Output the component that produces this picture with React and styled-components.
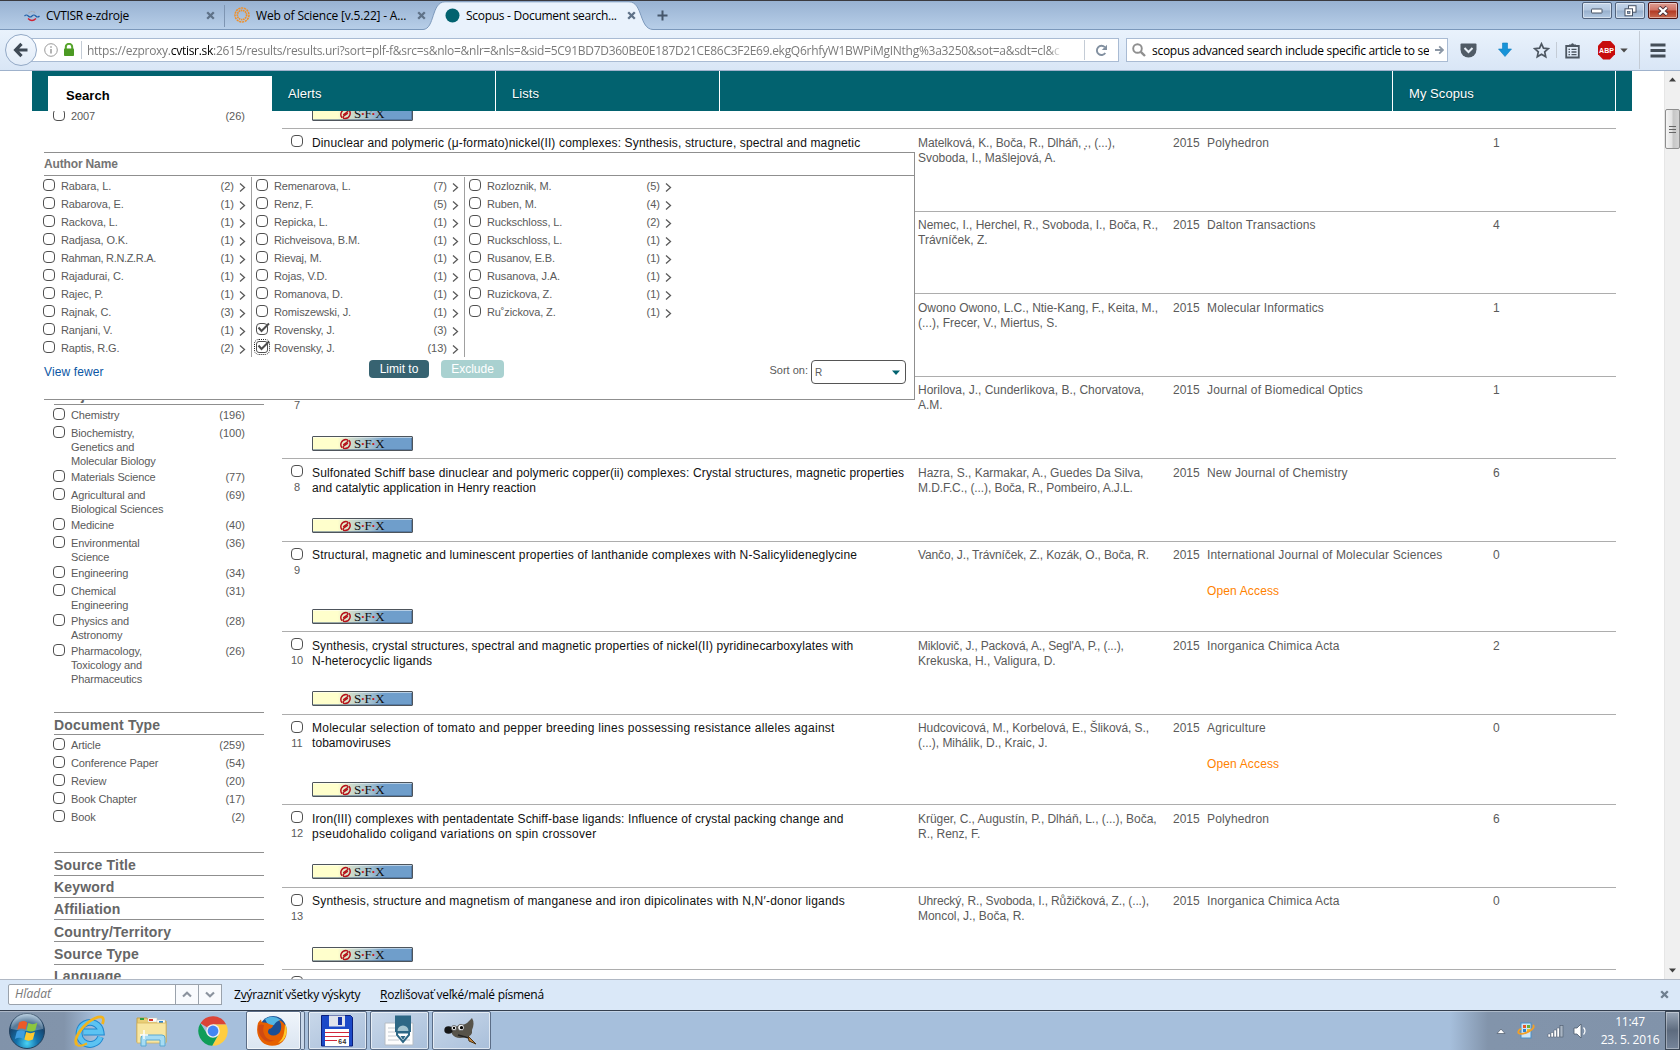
import React from "react";
import styled, { createGlobalStyle, css } from "styled-components";

const arial = `"Liberation Sans", Arial, sans-serif`;
const segoe = `"Open Sans", "Noto Sans", sans-serif`;

const GlobalStyle = createGlobalStyle`
  * { box-sizing: border-box; }
  html, body { margin: 0; padding: 0; background: #fff; overflow: hidden; }
  svg { display: block; flex: none; }
`;

const Screen = styled.div`
  width: 1680px;
  height: 1050px;
  display: flex;
  flex-direction: column;
  overflow: hidden;
  font-family: ${arial};
  color: #5a5a5a;
  background: #fff;
`;

/* ---------- browser: tab strip ---------- */

const TabStrip = styled.div`
  height: 30px;
  flex: none;
  display: flex;
  border-top: 1px solid #3a3a3f;
  border-bottom: 1px solid #7b98bb;
  background: linear-gradient(#98b2d2, #b7cee8);
`;

const Tab = styled.div`
  width: ${(p) => p.$w}px;
  height: 28px;
  display: flex;
  align-items: center;
  padding: 0 9px 0 ${(p) => p.$pad}px;
  gap: 6px;
  font: 12px ${segoe};
  letter-spacing: ${(p) => p.$ls}px;
  color: #000;
  white-space: nowrap;
`;

const TabLabel = styled.span`
  flex: 1;
  line-height: 27px;
`;

const TabDivider = styled.div`
  width: 1px;
  height: 22px;
  margin-top: 4px;
  background: #7e95b2;
`;

const ActiveTab = styled(Tab)`
  position: relative;
  z-index: 1;
  height: 29px;
  margin-bottom: -1px;
`;

const ActiveShape = styled.svg`
  position: absolute;
  left: -12px;
  top: 0;
  z-index: -1;
`;

const NewTab = styled.div`
  width: 34px;
  display: flex;
  align-items: center;
  justify-content: center;
`;

const WindowButtons = styled.div`
  margin-left: auto;
  padding: 1px 2px 0 0;
  display: flex;
  gap: 3px;
`;

const WindowButton = styled.div`
  width: 30px;
  height: 17px;
  display: flex;
  align-items: center;
  justify-content: center;
  border: 1px solid ${(p) => (p.$close ? "#4d1414" : "#50627c")};
  border-radius: 2px;
  box-shadow: inset 0 0 0 1px rgba(255, 255, 255, 0.45);
  background: ${(p) =>
    p.$close
      ? "linear-gradient(#dd9e93 0%, #cf7163 48%, #b23823 52%, #c86a50 100%)"
      : "linear-gradient(#c5d6ea 0%, #b2c6de 48%, #98b0cd 52%, #b4cae3 100%)"};
`;

/* ---------- browser: navigation bar ---------- */

const NavBar = styled.div`
  height: 41px;
  flex: none;
  display: flex;
  align-items: center;
  padding: 0 5px;
  border-bottom: 1px solid #9fb2cc;
  background: linear-gradient(#e9f2fc, #d9e6f6);
`;

const BackButton = styled.div`
  width: 32px;
  height: 32px;
  flex: none;
  margin-right: -15px;
  z-index: 1;
  display: flex;
  align-items: center;
  justify-content: center;
  border: 1px solid #93a9c6;
  border-radius: 50%;
  background: linear-gradient(#f3f8fe, #e2ecf8);
`;

const Field = styled.div`
  height: 24px;
  flex: none;
  display: flex;
  align-items: center;
  border: 1px solid #a9bbd3;
  background: #fff;
  font: 12px ${segoe};
  white-space: nowrap;
`;

const UrlField = styled(Field)`
  width: 1097px;
  padding-left: 21px;
`;

const UrlText = styled.div`
  width: 975px;
  margin-left: 5px;
  overflow: hidden;
  color: #7a7a7a;
  letter-spacing: -0.28px;
  mask-image: linear-gradient(90deg, #000 962px, transparent 975px);
  b { font-weight: 400; color: #000; }
`;

const ThinLine = styled.div`
  width: 1px;
  height: ${(p) => p.$h || 18}px;
  margin-left: ${(p) => (p.$push ? "auto" : `${p.$ml || 0}px`)};
  background: #c4ccd6;
`;

const ReloadBox = styled.div`
  width: 33px;
  display: flex;
  justify-content: center;
`;

const SearchField = styled(Field)`
  width: 322px;
  margin-left: 7px;
  padding: 0 3px 0 5px;
  gap: 6px;
  color: #000;
  letter-spacing: -0.28px;
`;

const SearchText = styled.div`
  flex: 1;
  overflow: hidden;
`;

const ToolIcons = styled.div`
  flex: 1;
  display: flex;
  align-items: center;
  height: 40px;
`;

const ToolIcon = styled.div`
  width: ${(p) => p.$w}px;
  flex: none;
  display: flex;
  align-items: center;
  justify-content: center;
  gap: 5px;
`;

const AbpBadge = styled.div`
  width: 17px;
  height: 19px;
  background: #c70d0d;
  clip-path: polygon(30% 0, 70% 0, 100% 27%, 100% 73%, 70% 100%, 30% 100%, 0 73%, 0 27%);
  color: #fff;
  font: bold 7px/19px ${arial};
  text-align: center;
`;

/* ---------- page ---------- */

const Viewport = styled.div`
  flex: 1;
  min-height: 0;
  display: flex;
`;

const Page = styled.div`
  position: relative;
  width: 1664px;
  display: flex;
  flex-direction: column;
`;

const Header = styled.div`
  height: 40px;
  flex: none;
  margin: 0 32px;
  padding: 0 16px;
  display: flex;
  background: #02626f;
`;

const HeaderItem = styled.div`
  width: ${(p) => p.$w}px;
  padding-left: 16px;
  border-right: 1px solid #fff;
  font-size: 13px;
  line-height: 45px;
  letter-spacing: 0.06px;
  color: #fff;
  text-shadow: 0 1px 1px #013a42;
`;

const SearchItem = styled(HeaderItem)`
  margin-top: 5px;
  padding-left: 18px;
  background: #fff;
  font-weight: bold;
  line-height: 39px;
  color: #000;
  text-shadow: none;
`;

const HeaderFill = styled.div`
  flex: 1;
  border-right: 1px solid #fff;
`;

const Body = styled.div`
  flex: 1;
  min-height: 0;
  overflow: hidden;
  display: flex;
  gap: 18px;
  padding-left: 54px;
`;

const Box = styled.span`
  width: 12px;
  height: 12px;
  flex: none;
  display: block;
  border: 1px solid #505050;
  border-radius: 4px;
  background: #fff;
  ${(p) =>
    p.$focus &&
    css`
      outline: 1px dotted #222;
      outline-offset: 1px;
      border-radius: 3px;
    `}
`;

const CheckMark = styled.svg`
  margin: -2px 0 0 0;
`;

function Checkbox({ checked, focus }) {
  return (
    <Box $focus={focus}>
      {checked && (
        <CheckMark width="13" height="12" viewBox="0 0 13 12">
          <path d="M1.5 5.5 L4.5 9 L12 1.5" fill="none" stroke="#4d4d4d" strokeWidth="2" />
        </CheckMark>
      )}
    </Box>
  );
}

/* ---------- left facets ---------- */

const Sidebar = styled.div`
  width: 210px;
  margin-top: -2px;
  flex: none;
`;

const FacetItem = styled.div`
  min-height: 18px;
  padding: 0 19px 2px 0;
  margin-left: -1px;
  display: flex;
  font-size: 11px;
  line-height: 14px;
  letter-spacing: -0.13px;
`;

const FacetName = styled.span`
  width: 100px;
  margin-left: 6px;
`;

const FacetCount = styled.span`
  margin-left: auto;
  letter-spacing: 0;
`;

const FacetSection = styled.div`
  margin-top: ${(p) => p.$gap}px;
  border-top: 1px solid #8f8f8f;
`;

const FacetHeading = styled.div`
  height: 22px;
  border-bottom: 1px solid #8f8f8f;
  font: bold 14px/25px ${arial};
  letter-spacing: 0.18px;
  color: #666;
`;

const FacetList = styled.div`
  padding-top: 3px;
`;

const ClosedHeading = styled(FacetHeading)`
  height: ${(p) => p.$h}px;
  line-height: ${(p) => p.$lh}px;
`;

/* ---------- results ---------- */

const Results = styled.div`
  width: 1334px;
  margin-top: -66px;
  flex: none;
`;

const Row = styled.div`
  height: ${(p) => p.$h}px;
  display: grid;
  grid-template-columns: 30px 606px 255px 34px 276px 1fr;
  border-top: 1px solid #adadad;
  font-size: 12px;
  line-height: 15px;
`;

const Mark = styled.div`
  width: 30px;
  padding-top: 6px;
  display: flex;
  flex-direction: column;
  align-items: center;
  gap: 3px;
  font-size: 11px;
`;

const Cell = styled.div`
  padding-top: ${(p) => p.$pad}px;
`;

const Title = styled.div`
  height: 30px;
  margin-bottom: ${(p) => p.$gap}px;
  color: #111;
`;

const Line = styled.div`
  letter-spacing: ${(p) => p.$ls || 0}px;
  white-space: pre;
`;

const Journal = styled(Cell)`
  letter-spacing: 0.14px;
`;

const OpenAccess = styled.div`
  margin-top: 21px;
  color: #ff8200;
`;

const Citations = styled(Cell)`
  padding-left: 10px;
`;

const SfxButton = styled.div`
  width: 101px;
  height: 15px;
  display: flex;
  align-items: center;
  gap: 3px;
  padding-left: 27px;
  border: 1px solid #4e555c;
  border-radius: 1px;
  box-shadow: inset 0 1px 0 rgba(255, 255, 255, 0.5), inset -1px -1px 0 rgba(60, 90, 130, 0.5);
  background: linear-gradient(90deg, #ffffcc 0 25%, #cfdccb 38%, #a3c0cf 58%, #6f9ecb 72%);
  font: 13px/13px "Liberation Serif", serif;
  letter-spacing: -0.5px;
  color: #111;
  i { font-style: normal; font-weight: bold; color: #c01515; }
`;

function Sfx() {
  return (
    <SfxButton>
      <svg width="11" height="12" viewBox="0 0 12 12" fill="none" stroke="#b5121b">
        <path d="M9.800 1.800 C12.600 5 10.500 11 5.500 11 C3 11 2.800 9 4.600 7.800 L8.500 5" strokeWidth="1.600" />
        <path d="M2.200 10.200 C-0.600 7 1.500 1 6.500 1 C9 1 9.200 3 7.400 4.200 L3.500 7" strokeWidth="1.600" />
      </svg>
      <span>S<i>·</i>F<i>·</i>X</span>
    </SfxButton>
  );
}

/* ---------- author panel ---------- */

const Panel = styled.div`
  position: absolute;
  left: 44px;
  top: 81px;
  width: 871px;
  height: 248px;
  display: flex;
  flex-direction: column;
  border: 1px solid #8f8f8f;
  border-left: none;
  background: #fff;
`;

const PanelHeading = styled.div`
  height: 23px;
  border-bottom: 1px solid #8f8f8f;
  font: bold 12px/22px ${arial};
  letter-spacing: -0.15px;
  color: #747474;
`;

const AuthorColumns = styled.div`
  height: 180px;
  margin: 1px 0 0 -1px;
  display: flex;
`;

const AuthorColumn = styled.div`
  width: ${(p) => p.$w}px;
  padding-left: ${(p) => p.$pl}px;
  ${(p) => !p.$last && "border-right: 1px solid #a0a0a0;"}
`;

const AuthorRow = styled.div`
  height: 18px;
  padding-right: 5px;
  display: flex;
  font-size: 11px;
  line-height: 19px;
  ${Box} { margin-top: 2px; }
`;

const AuthorName = styled.span`
  flex: 1;
  margin-left: 6px;
  letter-spacing: ${(p) => (p.$tight ? -0.33 : -0.12)}px;
`;

const Chevron = styled.svg`
  margin: 5px 0 0 5px;
`;

const PanelActions = styled.div`
  display: flex;
  align-items: flex-start;
  padding: 3px 8px 0 0;
`;

const ViewFewer = styled.span`
  width: 325px;
  font-size: 12px;
  line-height: 24px;
  letter-spacing: 0.12px;
  color: #0a56a4;
`;

const PillButton = styled.div`
  width: ${(p) => p.$w}px;
  height: 18px;
  margin-right: 12px;
  border-radius: 4px;
  background: ${(p) => (p.$muted ? "#a9d1d0" : "#376371")};
  color: #fff;
  font-size: 12px;
  line-height: 18px;
  text-align: center;
`;

const SortLabel = styled.span`
  margin-left: auto;
  padding-right: 3px;
  font-size: 11px;
  line-height: 20px;
`;

const Select = styled.div`
  width: 95px;
  height: 24px;
  padding: 1px 5px 0 3px;
  display: flex;
  align-items: center;
  justify-content: space-between;
  border: 1px solid #555;
  border-radius: 4px;
  font-size: 10px;
`;

/* ---------- scrollbar ---------- */

const Scrollbar = styled.div`
  width: 16px;
  display: flex;
  flex-direction: column;
  align-items: center;
  background: #f0f0f0;
  border-left: 1px solid #e6e6e6;
`;

const ScrollArrow = styled.div`
  height: 17px;
  display: flex;
  align-items: center;
`;

const Thumb = styled.div`
  width: 15px;
  height: 40px;
  margin: 21px 0 auto;
  display: flex;
  align-items: center;
  justify-content: center;
  border: 1px solid #8e8e8e;
  border-radius: 2px;
  background: linear-gradient(90deg, #f5f5f5, #e3e3e3 45%, #c6c6c6 55%, #d4d4d4);
`;

/* ---------- find bar ---------- */

const FindBar = styled.div`
  height: 31px;
  flex: none;
  display: flex;
  align-items: center;
  padding: 0 11px 1px 8px;
  border-top: 1px solid #b0b8c4;
  background: #dae8f8;
  font: 12px ${segoe};
  color: #000;
  u { text-underline-offset: 2px; }
`;

const FindInput = styled.div`
  width: 168px;
  height: 21px;
  padding-left: 6px;
  border: 1px solid #9aa2ac;
  border-radius: 2px 0 0 2px;
  background: #fff;
  line-height: 18px;
  font-style: italic;
  color: #777;
`;

const FindStep = styled.div`
  width: 24px;
  height: 21px;
  margin-left: -1px;
  display: flex;
  align-items: center;
  justify-content: center;
  border: 1px solid #9aa2ac;
  background: #f8fafd;
`;

const FindOption = styled.span`
  margin-left: ${(p) => p.$ml}px;
  width: ${(p) => p.$w}px;
  letter-spacing: -0.25px;
  white-space: nowrap;
`;

const FindClose = styled.div`
  margin-left: auto;
`;

/* ---------- taskbar ---------- */

const Taskbar = styled.div`
  height: 40px;
  flex: none;
  display: flex;
  align-items: stretch;
  border-top: 1px solid #343f4f;
  box-shadow: inset 0 1px 0 rgba(255, 255, 255, 0.35);
  background: linear-gradient(90deg, #8193aa 0, #8294ab 64px, #a6bfdc 96px, #a6bfdc 1450px, #8294ab 1488px, #8193aa 100%);
`;

const Pinned = styled.div`
  width: ${(p) => p.$w}px;
  padding-left: ${(p) => p.$pl || 0}px;
  display: flex;
  align-items: center;
  justify-content: center;
`;

const TaskButton = styled.div`
  width: ${(p) => p.$w || 59}px;
  margin: 0 3px 0 0;
  padding-right: ${(p) => (p.$active ? 3 : 2)}px;
  display: flex;
  align-items: center;
  justify-content: center;
  border: 1px solid #5b6d87;
  border-radius: 2px;
  box-shadow: inset 0 0 0 1px rgba(255, 255, 255, 0.6);
  background: ${(p) =>
    p.$active ? "linear-gradient(#f0f5fb, #dae5f1)" : "linear-gradient(150deg, #c9d8ea, #a9bfda)"};
`;

const StackEdge = styled.div`
  width: 4px;
  margin: 0 3px 0 -3px;
  border: 1px solid #5b6d87;
  border-left: none;
  border-radius: 0 2px 2px 0;
  background: #c9d8ea;
`;

const Tray = styled.div`
  margin-left: auto;
  display: flex;
  align-items: center;
`;

const Clock = styled.div`
  width: 70px;
  margin-left: 7px;
  font: 12px/18px ${segoe};
  letter-spacing: -0.17px;
  color: #fff;
  text-align: center;
  white-space: nowrap;
`;

const ShowDesktop = styled.div`
  width: 15px;
  height: 39px;
  border: 1px solid #3c4857;
  box-shadow: inset 0 0 0 1px rgba(255, 255, 255, 0.35);
  background: linear-gradient(#9aa7b8, #5d6b7e 50%, #76859a);
`;

/* ---------- data ---------- */

const authorColumns = [
  [["Rabara, L.", 2], ["Rabarova, E.", 1], ["Rackova, L.", 1], ["Radjasa, O.K.", 1], ["Rahman, R.N.Z.R.A.", 1], ["Rajadurai, C.", 1], ["Rajec, P.", 1], ["Rajnak, C.", 3], ["Ranjani, V.", 1], ["Raptis, R.G.", 2]],
  [["Remenarova, L.", 7], ["Renz, F.", 5], ["Repicka, L.", 1], ["Richveisova, B.M.", 1], ["Rievaj, M.", 1], ["Rojas, V.D.", 1], ["Romanova, D.", 1], ["Romiszewski, J.", 1], ["Rovensky, J.", 3, "on"], ["Rovensky, J.", 13, "focus"]],
  [["Rozloznik, M.", 5], ["Ruben, M.", 4], ["Ruckschloss, L.", 2], ["Ruckschloss, L.", 1], ["Rusanov, E.B.", 1], ["Rusanova, J.A.", 1], ["Ruzickova, Z.", 1], ["Ru˚zickova, Z.", 1]],
];

const subjects = [
  ["Chemistry", 196],
  ["Biochemistry, Genetics and Molecular Biology", 100],
  ["Materials Science", 77],
  ["Agricultural and Biological Sciences", 69],
  ["Medicine", 40],
  ["Environmental Science", 36],
  ["Engineering", 34],
  ["Chemical Engineering", 31],
  ["Physics and Astronomy", 28],
  ["Pharmacology, Toxicology and Pharmaceutics", 26],
];

const docTypes = [["Article", 259], ["Conference Paper", 54], ["Review", 20], ["Book Chapter", 17], ["Book", 2]];

const closedFacets = [
  ["Source Title", 23, 24],
  ["Keyword", 22, 22],
  ["Affiliation", 22, 22],
  ["Country/Territory", 22, 24],
  ["Source Type", 23, 24],
  ["Language", 22, 22],
];

/* text lines are [text, letter-spacing] pairs */
const rows = [
  { h: 83, pad: 7, gap: 23 },
  {
    n: 4, h: 83, pad: 7,
    t: [["Dinuclear and polymeric (μ-formato)nickel(II) complexes: Synthesis, structure, spectral and magnetic", 0.145]],
    a: [["Matelková, K., Boča, R., Dlháň, ̦., (...),", -0.11], ["Svoboda, I., Mašlejová, A.", -0.04]],
    j: "Polyhedron", c: 1,
  },
  {
    n: 5, h: 82, pad: 6,
    a: [["Nemec, I., Herchel, R., Svoboda, I., Boča, R.,", -0.03], ["Trávníček, Z.", 0]],
    j: "Dalton Transactions", c: 4,
  },
  {
    n: 6, h: 83, pad: 7,
    a: [["Owono Owono, L.C., Ntie-Kang, F., Keita, M.,", -0.03], ["(...), Frecer, V., Miertus, S.", 0]],
    j: "Molecular Informatics", c: 1,
  },
  {
    n: 7, h: 82, pad: 6,
    a: [["Horilova, J., Cunderlikova, B., Chorvatova,", 0], ["A.M.", 0]],
    j: "Journal of Biomedical Optics", c: 1,
  },
  {
    n: 8, h: 83, pad: 7,
    t: [["Sulfonated Schiff base dinuclear and polymeric copper(ii) complexes: Crystal structures, magnetic properties", 0.15], ["and catalytic application in Henry reaction", 0.06]],
    a: [["Hazra, S., Karmakar, A., Guedes Da Silva,", 0], ["M.D.F.C., (...), Boča, R., Pombeiro, A.J.L.", -0.09]],
    j: "New Journal of Chemistry", c: 6,
  },
  {
    n: 9, h: 90, pad: 6,
    t: [["Structural, magnetic and luminescent properties of lanthanide complexes with N-Salicylideneglycine", 0.165]],
    a: [["Vančo, J., Trávníček, Z., Kozák, O., Boča, R.", -0.14]],
    j: "International Journal of Molecular Sciences", c: 0, open: true,
  },
  {
    n: 10, h: 83, pad: 7,
    t: [["Synthesis, crystal structures, spectral and magnetic properties of nickel(II) pyridinecarboxylates with", 0.115], ["N-heterocyclic ligands", 0.13]],
    a: [["Miklovič, J., Packová, A., Segl'A, P., (...),", -0.19], ["Krekuska, H., Valigura, D.", 0.02]],
    j: "Inorganica Chimica Acta", c: 2,
  },
  {
    n: 11, h: 90, pad: 6,
    t: [["Molecular selection of tomato and pepper breeding lines possessing resistance alleles against", 0.255], ["tobamoviruses", 0.06]],
    a: [["Hudcovicová, M., Korbelová, E., Šliková, S.,", -0.07], ["(...), Mihálik, D., Kraic, J.", -0.04]],
    j: "Agriculture", c: 0, open: true,
  },
  {
    n: 12, h: 83, pad: 7,
    t: [["Iron(III) complexes with pentadentate Schiff-base ligands: Influence of crystal packing change and", 0.125], ["pseudohalido coligand variations on spin crossover", 0.26]],
    a: [["Krüger, C., Augustín, P., Dlháň, L., (...), Boča,", -0.04], ["R., Renz, F.", -0.04]],
    j: "Polyhedron", c: 6,
  },
  {
    n: 13, h: 82, pad: 6,
    t: [["Synthesis, structure and magnetism of manganese and iron dipicolinates with N,N′-donor ligands", 0.21]],
    a: [["Uhrecký, R., Svoboda, I., Růžičková, Z., (...),", -0.14], ["Moncol, J., Boča, R.", -0.04]],
    j: "Inorganica Chimica Acta", c: 0,
  },
  { n: 14, h: 82, pad: 7 },
];

/* ---------- icons ---------- */

const CloseX = ({ color = "#5f7288", size = 9 }) => (
  <svg width={size} height={size} viewBox="0 0 9 9">
    <path d="M1.2 1.2 L7.8 7.8 M7.8 1.2 L1.2 7.8" stroke={color} strokeWidth="2.3" />
  </svg>
);

const WindowsOrb = () => (
  <svg width="38" height="38" viewBox="0 0 38 38">
    <defs>
      <radialGradient id="orb" cx="50%" cy="85%" r="85%">
        <stop offset="0" stopColor="#49d3f5" />
        <stop offset="0.35" stopColor="#1473ad" />
        <stop offset="0.7" stopColor="#174670" />
        <stop offset="1" stopColor="#a7c4dc" />
      </radialGradient>
    </defs>
    <circle cx="19" cy="19" r="17.5" fill="url(#orb)" stroke="#23415e" />
    <path d="M3 17 A16 16 0 0 1 35 17 Q19 21 3 17 Z" fill="#fff" opacity="0.28" />
    <path d="M11 10.500 Q15 7.500 19.200 10.400 L17.500 17.800 Q13.500 15.400 9.200 17.900 Z" fill="#ee5a27" />
    <path d="M20.400 11 Q24.500 13.400 29.300 10.800 L27.300 18.300 Q22.800 20.700 18.600 18.300 Z" fill="#8cc63f" />
    <path d="M8.800 19.400 Q13 17 17.100 19.400 L15.300 26.900 Q11.200 24.500 6.900 27 Z" fill="#3f9de0" />
    <path d="M18.200 20 Q22.500 22.300 26.900 20 L24.900 27.500 Q20.500 29.800 16.400 27.500 Z" fill="#fdc82f" />
  </svg>
);

const IeIcon = () => (
  <svg width="34" height="34" viewBox="0 0 34 34" fill="none">
    <path d="M27.500 23 A11 11 0 1 1 28 18 H10.500" stroke="#1f87cf" strokeWidth="6.800" />
    <path d="M27.500 23 A11 11 0 1 1 28 18 H10.500" stroke="#5cc3f2" strokeWidth="4.800" />
    <path d="M4 31 C-1 25 11 9 22 4.200 C29 1.500 32 3 29.500 10" stroke="#f2b41c" strokeWidth="2.800" />
    <path d="M4 31 C6.500 33 11 31 14 29.500" stroke="#f2b41c" strokeWidth="2" />
  </svg>
);

const ExplorerIcon = () => (
  <svg width="34" height="32" viewBox="0 0 34 32">
    <path d="M2 3 H12 L14 6 H31 V27 H2 Z" fill="#e9cf77" stroke="#c2a04a" />
    <rect x="13" y="3" width="9" height="4" fill="#fff" stroke="#c9c9b0" strokeWidth="0.5" />
    <rect x="22" y="5" width="8" height="4" fill="#fff" stroke="#c9c9b0" strokeWidth="0.5" />
    <rect x="5" y="3" width="4" height="2" fill="#2f9e3e" />
    <rect x="14" y="4" width="4" height="2" fill="#d7372b" />
    <rect x="24" y="6" width="4" height="2" fill="#2a86d1" />
    <path d="M2 8 H31 V28 H2 Z" fill="#f7e6a2" stroke="#d5b45d" strokeWidth="0.8" />
    <path d="M6 31 V23 Q6 20 9 20 H27 Q30 20 30 23 V31 H25 V25 H11 V31 Z" fill="#a6dcf3" stroke="#5aa9d2" />
    <path d="M5 20 H13 M9 15 V24" stroke="#fff" strokeWidth="1.400" />
  </svg>
);

const ChromeIcon = () => (
  <svg width="30" height="30" viewBox="0 0 30 30">
    <path d="M15 15 L2.440 7.250 A14.750 14.750 0 0 1 28.200 8.500 L15 8.500 Z" fill="#db4437" />
    <path d="M28.200 8.500 A14.750 14.750 0 0 1 14.200 29.740 L20.630 18.250 L15 8.500 Z" fill="#ffcd40" />
    <path d="M2.440 7.250 A14.750 14.750 0 0 0 14.200 29.740 L20.630 18.250 L9.370 18.250 Z" fill="#0f9d58" />
    <circle cx="15" cy="15" r="6.800" fill="#f1f1f1" />
    <circle cx="15" cy="15" r="5.400" fill="#4285f4" />
  </svg>
);

const FirefoxIcon = () => (
  <svg width="32" height="32" viewBox="0 0 32 32">
    <circle cx="17" cy="14.500" r="13.500" fill="#1b4f94" />
    <path d="M9 4 Q17 -1 25 5 Q20 6 18 10 Q14 12 11 8 Z" fill="#52b5e2" />
    <path d="M2 8 Q3 6 5 4.500 Q5 7 7 7.500 Q11 7 13 9 Q15 10 17 10 Q17 13 13 14 Q11 17 13 19 Q17 22 22 19 Q26 16 25 9 Q24 6 22.500 5 Q29 7 30.500 14 Q32 24 23 29.500 Q13 33 6 27 Q-1 20 2 8 Z" fill="#e66000" />
    <path d="M29 9 Q31.500 13 30.500 18 Q29 26 22 28 Q27 24 28 18 Q29 13 29 9 Z" fill="#ffcb2d" />
    <path d="M2.500 10 Q5 9 8 10 Q6 16 9 21 Q12 26 19 25 Q12 29 7 24 Q1 18 2.500 10 Z" fill="#d04a12" />
  </svg>
);

const FloppyText = styled.text`
  font: bold 7px "Liberation Mono", monospace;
`;

const FloppyIcon = () => (
  <svg width="32" height="32" viewBox="0 0 32 32">
    <path d="M0.500 0.500 H29.500 L31.500 2.500 V31 H0.500 Z" fill="#1b49c8" stroke="#0b1f7a" />
    <rect x="8" y="0.500" width="16" height="11" fill="#dfe3ec" />
    <rect x="17" y="2" width="4" height="8" fill="#1635a8" />
    <rect x="4" y="14" width="24" height="17" fill="#fff" />
    <path d="M4 17.500 H28 M4 21.500 H28 M4 25.500 H16" stroke="#d1263a" />
    <FloppyText x="17" y="28.500" fill="#333">64</FloppyText>
  </svg>
);

const ReaderIcon = () => (
  <svg width="30" height="32" viewBox="0 0 30 32">
    <path d="M1 8 H29 V30 H1 Z" fill="#fdfdfd" stroke="#b5bcc4" />
    <path d="M4 13 H12 M4 17 H13 M4 21 H12 M4 25 H15 M20 25 H26 M22 17 H26" stroke="#c3c9d0" />
    <path d="M11 0.500 H27 V17 H11 Z" fill="#2d6785" />
    <path d="M13.500 16 A5.500 5.500 0 0 1 24.500 16 Z" fill="#a3c3cf" />
    <path d="M13 17.500 H25 V20 L19 27 L13 20 Z" fill="#fff" stroke="#2d6785" strokeWidth="2" />
    <path d="M16.500 21 H21.500 L19 25 Z" fill="#2d6785" />
  </svg>
);

const GimpIcon = () => (
  <svg width="34" height="28" viewBox="0 0 34 28">
    <path d="M6 10 Q12 11 16 7 Q19 9 23 6 L28 1 Q31 6 28 13 Q29 19 22 20 Q12 23 8 17 Z" fill="#57534a" />
    <ellipse cx="4.500" cy="13" rx="4.200" ry="3.800" fill="#161616" />
    <circle cx="10" cy="11" r="2.600" fill="#f4f4f4" stroke="#333" strokeWidth="0.600" />
    <circle cx="17" cy="10.500" r="3.200" fill="#f4f4f4" stroke="#333" strokeWidth="0.600" />
    <circle cx="10" cy="11" r="1.200" />
    <circle cx="17.500" cy="10.700" r="1.600" />
    <path d="M14 18 L25 21" stroke="#222" strokeWidth="1.500" />
    <path d="M24 19 L32 27 L25 24 Z" fill="#c9873b" stroke="#4a3315" />
  </svg>
);

/* ---------- sections ---------- */

function BrowserTabs() {
  return (
    <TabStrip>
      <Tab $w={224} $pad={24} $ls={-0.29}>
        <svg width="16" height="14" viewBox="0 0 16 14" fill="none">
          <path d="M4.500 5.500 A4 4 0 0 1 11.500 5.500" stroke="#a5adb8" strokeWidth="1.200" strokeDasharray="2 0.600" />
          <path d="M0.500 8 q1.900 -2 3.750 0 t3.750 0 t3.750 0 t3.750 0" stroke="#2161a8" strokeWidth="1.200" />
          <path d="M4 10.500 Q8 14.500 12 10.500" stroke="#cf2233" strokeWidth="1.300" />
        </svg>
        <TabLabel>CVTISR e-zdroje</TabLabel>
        <CloseX />
      </Tab>
      <TabDivider />
      <Tab $w={210} $pad={9} $ls={-0.18}>
        <svg width="16" height="16" viewBox="0 0 16 16" fill="none" stroke="#f08f27">
          <circle cx="8" cy="8" r="7" strokeWidth="1.500" strokeDasharray="2.200 0.700" />
          <circle cx="8" cy="8" r="4.600" strokeWidth="1.700" strokeDasharray="1.600 0.600" />
        </svg>
        <TabLabel>Web of Science [v.5.22] - A...</TabLabel>
        <CloseX />
      </Tab>
      <ActiveTab $w={210} $pad={10} $ls={-0.28}>
        <ActiveShape width="236" height="29" viewBox="0 0 236 29">
          <path d="M0 28.500 C12 28 8 1 22 0.800 H206 C220 1 216 28 230 28.500 V29 H0 Z" fill="#e9f2fc" />
          <path d="M0 28.500 C12 28 8 1 22 0.800 H206 C220 1 216 28 230 28.500" fill="none" stroke="#7b98bb" />
        </ActiveShape>
        <svg width="15" height="15" viewBox="0 0 15 15">
          <circle cx="7.500" cy="7.500" r="7" fill="#02626f" />
        </svg>
        <TabLabel>Scopus - Document search...</TabLabel>
        <CloseX />
      </ActiveTab>
      <NewTab>
        <svg width="11" height="11" viewBox="0 0 11 11">
          <path d="M5.500 0.500 V10.500 M0.500 5.500 H10.500" stroke="#45566b" strokeWidth="2" />
        </svg>
      </NewTab>
      <WindowButtons>
        <WindowButton>
          <svg width="12" height="6" viewBox="0 0 12 6">
            <rect x="0.500" y="1" width="10.500" height="4" rx="0.500" fill="#fff" stroke="#465264" />
          </svg>
        </WindowButton>
        <WindowButton>
          <svg width="13" height="12" viewBox="0 0 13 12">
            <rect x="4.500" y="0.700" width="7.500" height="6.500" fill="#fff" stroke="#465264" />
            <rect x="1" y="3.800" width="7.500" height="7" fill="#fff" stroke="#465264" />
            <rect x="3.500" y="6.500" width="2.500" height="2" fill="#8ba3c0" stroke="#465264" strokeWidth="0.700" />
          </svg>
        </WindowButton>
        <WindowButton $close>
          <svg width="12" height="10" viewBox="0 0 12 10">
            <path d="M2 1.200 L10 8.800 M10 1.200 L2 8.800" stroke="#4a3038" strokeWidth="4" />
            <path d="M2.200 1.500 L9.800 8.500 M9.800 1.500 L2.200 8.500" stroke="#fff" strokeWidth="2.300" />
          </svg>
        </WindowButton>
      </WindowButtons>
    </TabStrip>
  );
}

function Navigation() {
  return (
    <NavBar>
      <BackButton>
        <svg width="16" height="16" viewBox="0 0 16 16" fill="none" stroke="#3f4a56">
          <path d="M8.500 1.800 L2.600 8 L8.500 14.200 M3 8 H14.500" strokeWidth="3.200" />
        </svg>
      </BackButton>
      <UrlField>
        <svg width="14" height="14" viewBox="0 0 14 14" fill="none" stroke="#9a9a9a">
          <circle cx="7" cy="7" r="6.300" />
          <path d="M7 6 V10.500 M7 3.300 V4.800" strokeWidth="1.500" />
        </svg>
        <svg width="23" height="14" viewBox="0 0 23 14">
          <path d="M7.800 6 V4 A3.200 3.200 0 0 1 14.200 4 V6" fill="none" stroke="#57a52c" strokeWidth="2" />
          <rect x="6" y="5.500" width="10" height="7.500" rx="0.800" fill="#4c9a23" />
        </svg>
        <ThinLine />
        <UrlText>
          https://ezproxy.<b>cvtisr.sk</b>:2615/results/results.uri?sort=plf-f&amp;src=s&amp;nlo=&amp;nlr=&amp;nls=&amp;sid=5C91BD7D360BE0E187D21CE86C3F2E69.ekgQ6rhfyW1BWPiMgINthg%3a3250&amp;sot=a&amp;sdt=cl&amp;c
        </UrlText>
        <ThinLine $h={20} $push />
        <ReloadBox>
          <svg width="13" height="13" viewBox="0 0 13 13">
            <path d="M10.300 9 A4.600 4.600 0 1 1 9.800 3.200" fill="none" stroke="#8290a0" strokeWidth="1.900" />
            <path d="M12 0.800 V6 H6.800 Z" fill="#8290a0" />
          </svg>
        </ReloadBox>
      </UrlField>
      <SearchField>
        <svg width="14" height="14" viewBox="0 0 14 14" fill="none" stroke="#8f8f8f">
          <circle cx="5.500" cy="5.500" r="4.300" strokeWidth="1.900" />
          <path d="M8.800 8.800 L13 13" strokeWidth="2.400" />
        </svg>
        <SearchText>scopus advanced search include specific article to se</SearchText>
        <svg width="9" height="10" viewBox="0 0 9 10" fill="none" stroke="#8b97a5">
          <path d="M0 5 H7.500 M4.200 1.300 L8 5 L4.200 8.700" strokeWidth="1.800" />
        </svg>
      </SearchField>
      <ToolIcons>
        <ToolIcon $w={41}>
          <svg width="17" height="15" viewBox="0 0 17 15">
            <path d="M1.500 0.500 H15.500 Q16.500 0.500 16.500 1.500 V6.500 A8 8 0 0 1 0.500 6.500 V1.500 Q0.500 0.500 1.500 0.500 Z" fill="#505b66" />
            <path d="M4.500 5 L8.500 9 L12.500 5" fill="none" stroke="#e8f0f8" strokeWidth="2" />
          </svg>
        </ToolIcon>
        <ToolIcon $w={32}>
          <svg width="14" height="16" viewBox="0 0 14 16">
            <path d="M4.500 1 H9.500 V7 H13.500 L7 14.500 L0.500 7 H4.500 Z" fill="#1793d8" stroke="#0c7cc0" strokeWidth="0.600" />
          </svg>
        </ToolIcon>
        <ToolIcon $w={40}>
          <svg width="17" height="17" viewBox="0 0 17 17">
            <path d="M8.500 1.800 L10.500 6.200 L15.300 6.700 L11.700 9.900 L12.700 14.700 L8.500 12.200 L4.300 14.700 L5.300 9.900 L1.700 6.700 L6.500 6.200 Z" fill="none" stroke="#4d5762" strokeWidth="1.700" />
          </svg>
        </ToolIcon>
        <ThinLine $h={16} $ml={-5} />
        <ToolIcon $w={30}>
          <svg width="15" height="17" viewBox="0 0 15 17">
            <path d="M1.200 4 H13.800 V15.500 H1.200 Z" fill="none" stroke="#4d5762" strokeWidth="1.800" />
            <path d="M4 4 V2.500 H6 Q7.500 0 9 2.500 H11 V4 Z" fill="#4d5762" />
            <path d="M3.500 7.300 H5 M6.500 7.300 H11.500 M3.500 10 H5 M6.500 10 H11.500 M3.500 12.700 H5 M6.500 12.700 H11.500" stroke="#4d5762" strokeWidth="1.300" />
          </svg>
        </ToolIcon>
        <ToolIcon $w={52}>
          <AbpBadge>ABP</AbpBadge>
          <svg width="8" height="5" viewBox="0 0 8 5">
            <path d="M0.300 0.500 H7.700 L4 4.500 Z" fill="#4a4a4a" />
          </svg>
        </ToolIcon>
        <ThinLine $h={38} $push />
        <ToolIcon $w={35}>
          <svg width="17" height="15" viewBox="0 0 17 15">
            <path d="M1.500 2 H16.500 M1.500 7.500 H16.500 M1.500 13 H16.500" stroke="#444e58" strokeWidth="3" />
          </svg>
        </ToolIcon>
      </ToolIcons>
    </NavBar>
  );
}

function Facet({ name, count }) {
  return (
    <FacetItem>
      <Checkbox />
      <FacetName>{name}</FacetName>
      <FacetCount>({count})</FacetCount>
    </FacetItem>
  );
}

function Facets() {
  return (
    <Sidebar>
      <Facet name="2007" count={26} />
      <FacetSection $gap={255}>
        <FacetHeading>Subject Area</FacetHeading>
        <FacetList>
          {subjects.map(([name, count]) => <Facet key={name} name={name} count={count} />)}
        </FacetList>
      </FacetSection>
      <FacetSection $gap={24}>
        <FacetHeading>Document Type</FacetHeading>
        <FacetList>
          {docTypes.map(([name, count]) => <Facet key={name} name={name} count={count} />)}
        </FacetList>
      </FacetSection>
      <FacetSection $gap={24}>
        {closedFacets.map(([name, h, lh]) => <ClosedHeading key={name} $h={h} $lh={lh}>{name}</ClosedHeading>)}
      </FacetSection>
    </Sidebar>
  );
}

function Lines({ lines = [] }) {
  return lines.map(([text, ls]) => <Line key={text} $ls={ls}>{text}</Line>);
}

function Result({ row }) {
  return (
    <Row $h={row.h}>
      <Mark>
        {row.n && <Checkbox />}
        {row.n}
      </Mark>
      <Cell $pad={row.pad}>
        <Title $gap={row.gap || (row.open ? 30 : 22) + (7 - row.pad)}><Lines lines={row.t} /></Title>
        <Sfx />
      </Cell>
      <Cell $pad={row.pad}><Lines lines={row.a} /></Cell>
      <Cell $pad={row.pad}>{row.a && "2015"}</Cell>
      <Journal $pad={row.pad}>
        {row.j}
        {row.open && <OpenAccess>Open Access</OpenAccess>}
      </Journal>
      <Citations $pad={row.pad}>{row.c}</Citations>
    </Row>
  );
}

const columnShapes = [
  { w: 209, pl: 0 },
  { w: 213, pl: 4 },
  { w: 212, pl: 4 },
];

function AuthorPanel() {
  return (
    <Panel>
      <PanelHeading>Author Name</PanelHeading>
      <AuthorColumns>
        {authorColumns.map((column, i) => (
          <AuthorColumn key={i} $w={columnShapes[i].w} $pl={columnShapes[i].pl} $last={i === 2}>
            {column.map(([name, count, state], k) => (
              <AuthorRow key={k}>
                <Checkbox checked={!!state} focus={state === "focus"} />
                <AuthorName $tight={name.length > 17}>{name}</AuthorName>
                <span>({count})</span>
                <Chevron width="7" height="11" viewBox="0 0 7 11">
                  <path d="M1 1.500 L5.500 5.500 L1 9.500" fill="none" stroke="#5a5a5a" strokeWidth="1.300" />
                </Chevron>
              </AuthorRow>
            ))}
          </AuthorColumn>
        ))}
      </AuthorColumns>
      <PanelActions>
        <ViewFewer>View fewer</ViewFewer>
        <PillButton $w={60}>Limit to</PillButton>
        <PillButton $w={63} $muted>Exclude</PillButton>
        <SortLabel>Sort on:</SortLabel>
        <Select>
          R
          <svg width="8" height="5" viewBox="0 0 8 5">
            <path d="M0 0.500 H8 L4 5 Z" fill="#02626f" />
          </svg>
        </Select>
      </PanelActions>
    </Panel>
  );
}

function Find() {
  return (
    <FindBar>
      <FindInput>Hľadať</FindInput>
      <FindStep>
        <svg width="10" height="7" viewBox="0 0 10 7"><path d="M1 5.500 L5 1.800 L9 5.500" fill="none" stroke="#8b939e" strokeWidth="2.200" /></svg>
      </FindStep>
      <FindStep>
        <svg width="10" height="7" viewBox="0 0 10 7"><path d="M1 1.500 L5 5.200 L9 1.500" fill="none" stroke="#8b939e" strokeWidth="2.200" /></svg>
      </FindStep>
      <FindOption $ml={12} $w={128}>Z<u>v</u>ýrazniť všetky výskyty</FindOption>
      <FindOption $ml={18} $w={170}><u>R</u>ozlišovať veľké/malé písmená</FindOption>
      <FindClose><CloseX color="#6f7f90" /></FindClose>
    </FindBar>
  );
}

function WindowsTaskbar() {
  return (
    <Taskbar>
      <Pinned $w={54}><WindowsOrb /></Pinned>
      <Pinned $w={70} $pl={2}><IeIcon /></Pinned>
      <Pinned $w={54} $pl={2}><ExplorerIcon /></Pinned>
      <Pinned $w={68} $pl={2}><ChromeIcon /></Pinned>
      <TaskButton $w={55} $active><FirefoxIcon /></TaskButton>
      <StackEdge />
      <TaskButton><FloppyIcon /></TaskButton>
      <TaskButton><ReaderIcon /></TaskButton>
      <TaskButton><GimpIcon /></TaskButton>
      <Tray>
        <svg width="92" height="20" viewBox="0 0 92 20">
          <path d="M1 12.500 L5 8 L9 12.500 Z" fill="#fff" stroke="#4d5a6c" strokeWidth="0.700" />
          <rect x="25" y="2" width="10" height="15" fill="#cfe6f6" stroke="#4a90c8" />
          <rect x="27" y="4" width="3" height="3" fill="#e8582a" />
          <rect x="31" y="4" width="3" height="3" fill="#69b03c" />
          <rect x="27" y="8" width="3" height="3" fill="#2e82d0" />
          <rect x="31" y="8" width="3" height="3" fill="#f2bd2a" />
          <path d="M37 4 C41 8 26 15 22.500 12 C21.500 10.500 23 9 25 7.500" fill="none" stroke="#f0a02a" strokeWidth="1.800" />
          <path d="M52 16 V13 H54.500 V16 Z M55 16 V11.500 H57.500 V16 Z M58 16 V9 H60.500 V16 Z M61 16 V7 H63.500 V16 Z" fill="#fff" stroke="#4d5a6c" strokeWidth="0.500" />
          <rect x="64" y="4.500" width="3" height="11.500" fill="#a9b5c4" stroke="#4d5a6c" strokeWidth="0.600" />
          <path d="M78 7 H81 L85 3 V17 L81 13 H78 Z" fill="#fff" stroke="#4d5a6c" strokeWidth="0.800" />
          <path d="M87.500 6.500 Q90.500 10 87.500 13.500" fill="none" stroke="#fff" strokeWidth="1.200" />
        </svg>
        <Clock>11:47<br />23. 5. 2016</Clock>
        <ShowDesktop />
      </Tray>
    </Taskbar>
  );
}

export default function App() {
  return (
    <Screen>
      <GlobalStyle />
      <BrowserTabs />
      <Navigation />
      <Viewport>
        <Page>
          <Header>
            <SearchItem $w={224}>Search</SearchItem>
            <HeaderItem $w={224}>Alerts</HeaderItem>
            <HeaderItem $w={224}>Lists</HeaderItem>
            <HeaderFill />
            <HeaderItem $w={223}>My Scopus</HeaderItem>
          </Header>
          <Body>
            <Facets />
            <Results>
              {rows.map((row, i) => <Result key={i} row={row} />)}
            </Results>
          </Body>
          <AuthorPanel />
        </Page>
        <Scrollbar>
          <ScrollArrow>
            <svg width="7" height="5" viewBox="0 0 7 5"><path d="M0 4.500 L3.500 0.500 L7 4.500 Z" fill="#404040" /></svg>
          </ScrollArrow>
          <Thumb>
            <svg width="7" height="9" viewBox="0 0 7 9"><path d="M0 1.500 H7 M0 4.500 H7 M0 7.500 H7" stroke="#666" /></svg>
          </Thumb>
          <ScrollArrow>
            <svg width="7" height="5" viewBox="0 0 7 5"><path d="M0 0.500 L3.500 4.500 L7 0.500 Z" fill="#404040" /></svg>
          </ScrollArrow>
        </Scrollbar>
      </Viewport>
      <Find />
      <WindowsTaskbar />
    </Screen>
  );
}
